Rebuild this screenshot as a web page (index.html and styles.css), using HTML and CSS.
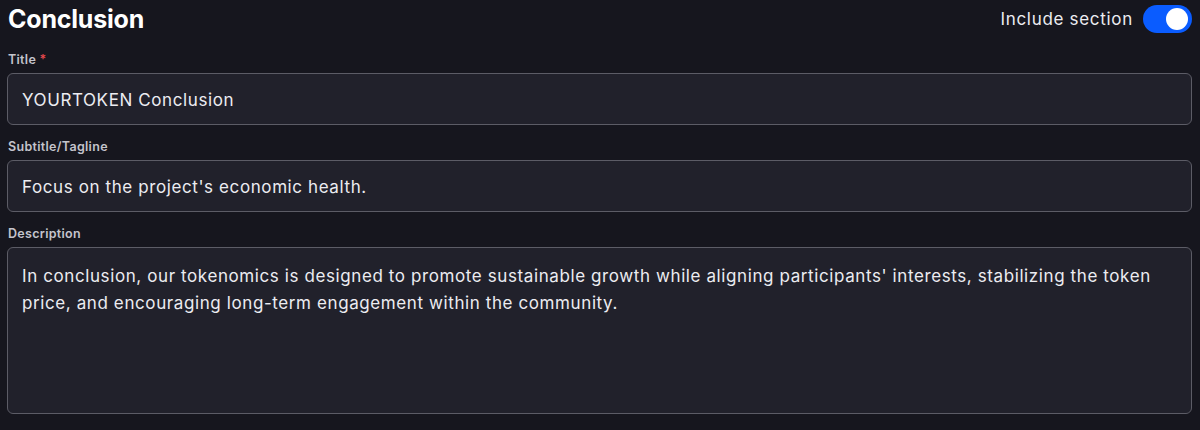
FILE: index.html
```html
<!DOCTYPE html>
<html lang="en">
<head>
    <meta charset="UTF-8">
    <meta name="viewport" content="width=device-width, initial-scale=1.0">
    <title>Conclusion</title>
    <link rel="stylesheet" href="styles.css">
</head>
<body>
    <div class="section">
        <div class="section-header">
            <h2>Conclusion</h2>
            <label class="include">
                <span>Include section</span>
                <span class="toggle"><span class="knob"></span></span>
            </label>
        </div>

        <div class="field">
            <label for="title">Title <span class="required">*</span></label>
            <input id="title" type="text" value="YOURTOKEN Conclusion">
        </div>

        <div class="field">
            <label for="subtitle">Subtitle/Tagline</label>
            <input id="subtitle" type="text" value="Focus on the project's economic health.">
        </div>

        <div class="field">
            <label for="description">Description</label>
            <textarea id="description">In conclusion, our tokenomics is designed to promote sustainable growth while aligning participants' interests, stabilizing the token price, and encouraging long-term engagement within the community.</textarea>
        </div>
    </div>
</body>
</html>
```

FILE: styles.css
```css
body {
    background-color: #16161e;
    margin: 0;
    font-family: Inter, "Noto Sans", sans-serif;
    color: #ececf1;
}
.section {
    padding: 0 8px 0 7px;
}
.section-header {
    display: flex;
    justify-content: space-between;
    align-items: center;
    height: 38px;
}
.section-header h2 {
    margin: 0 0 0 1px;
    font-size: 25px;
    font-weight: 700;
    color: #ffffff;
    letter-spacing: -0.2px;
}
.include {
    display: flex;
    align-items: center;
    gap: 10px;
    font-size: 17px;
    letter-spacing: 0.7px;
    color: #ececf1;
}
.toggle {
    position: relative;
    width: 49px;
    height: 28px;
    border-radius: 14px;
    background-color: #0a5cff;
}
.knob {
    position: absolute;
    top: 3px;
    right: 4px;
    width: 22px;
    height: 22px;
    border-radius: 50%;
    background-color: #ffffff;
}
.field {
    margin-top: 14px;
}
.field label {
    display: block;
    font-size: 12.5px;
    font-weight: 600;
    line-height: 16px;
    letter-spacing: 0.3px;
    color: #c4c4cc;
    margin: 0 0 5px 1px;
}
.required {
    color: #e5484d;
}
input[type="text"], textarea {
    display: block;
    box-sizing: border-box;
    width: 100%;
    margin: 0;
    background-color: #21212b;
    border: 1px solid #5c5c66;
    border-radius: 6px;
    color: #ececf1;
    font-family: Inter, "Noto Sans", sans-serif;
    font-size: 17px;
    letter-spacing: 0.6px;
    outline: none;
}
input[type="text"] {
    height: 52px;
    padding: 2px 14px 0;
}
textarea {
    height: 167px;
    padding: 15px 14px;
    line-height: 27px;
    resize: none;
}
```
